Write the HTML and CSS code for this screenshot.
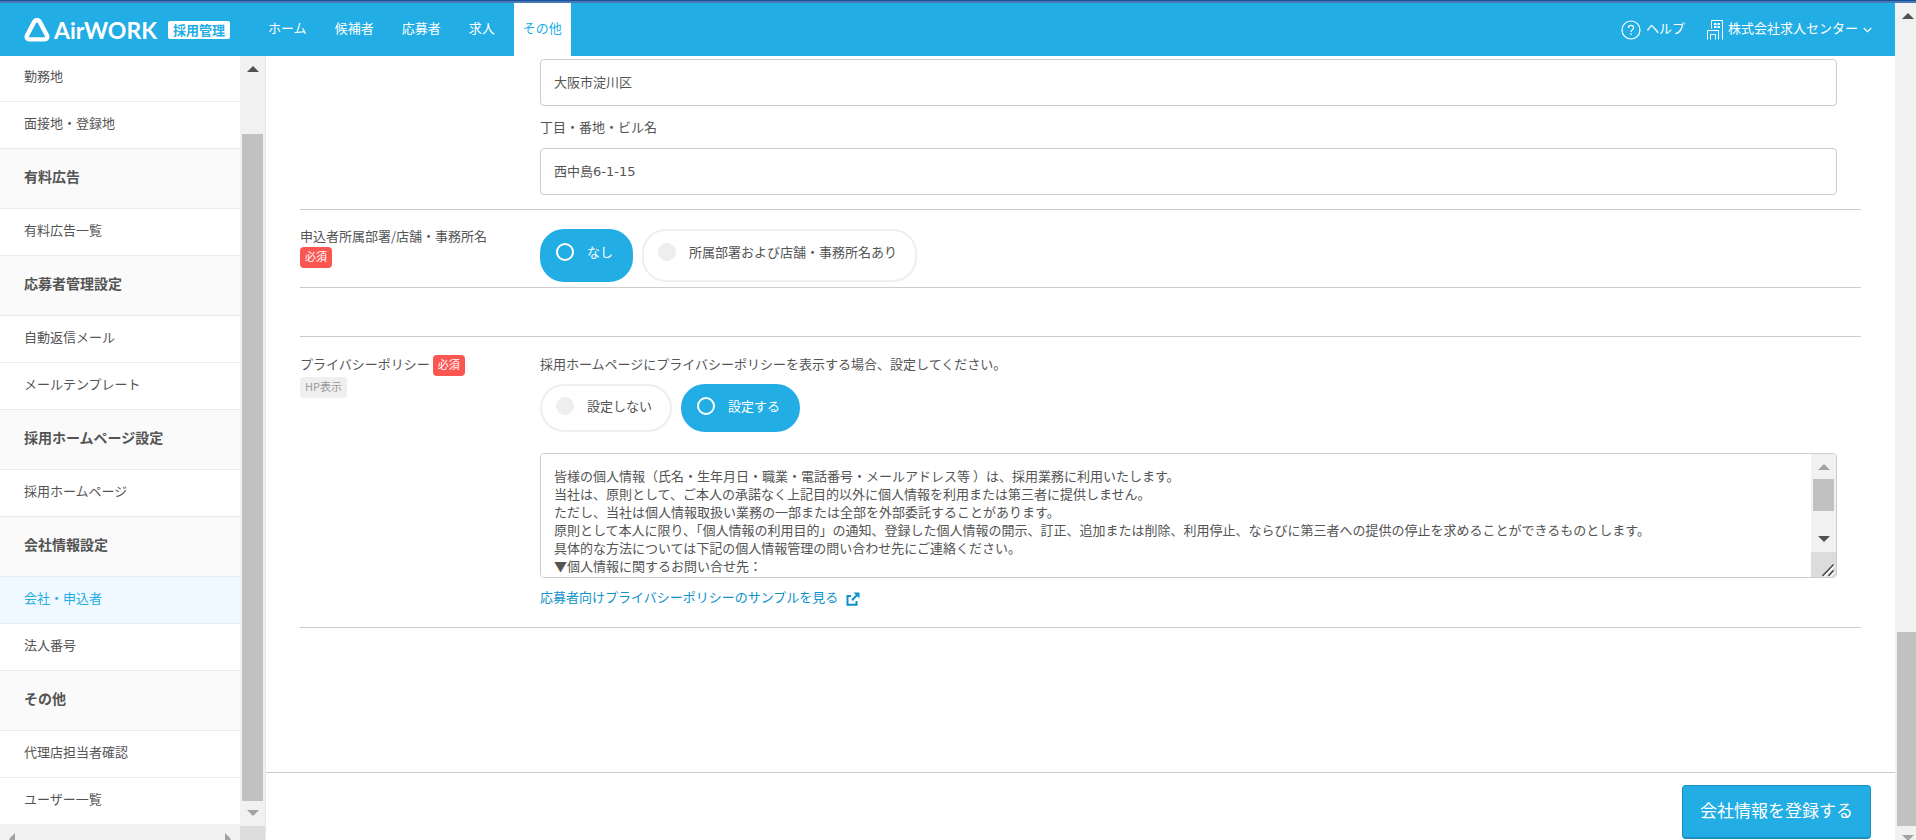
FILE: index.html
```html
<!DOCTYPE html>
<html lang="ja">
<head>
<meta charset="utf-8">
<title>AirWORK 採用管理</title>
<link rel="stylesheet" href="styles.css">
</head>
<body>
<div class="strip"></div>
<div class="window">
  <div class="page">
    <header class="header">
      <a class="logo" href="#">
        <svg class="logo-mark" viewBox="0 0 26 24" width="26" height="24" aria-hidden="true"><path d="M10.300 3.600 3.100 17.200C2 19.400 3.200 21.400 5.600 21.400H20.400C22.800 21.400 24 19.400 22.900 17.200L15.700 3.600C14.500 1.500 11.500 1.500 10.300 3.600Z" fill="none" stroke="#fff" stroke-width="4.400"/></svg>
        <span class="logo-name">AirWORK</span>
        <span class="logo-tag">採用管理</span>
      </a>
      <nav class="nav">
        <a class="nav-item" href="#">ホーム</a>
        <a class="nav-item" href="#">候補者</a>
        <a class="nav-item" href="#">応募者</a>
        <a class="nav-item" href="#">求人</a>
        <a class="nav-item nav-item-on" href="#">その他</a>
      </nav>
      <div class="account">
        <a class="help" href="#">
          <svg viewBox="0 0 20 20" width="20" height="20" fill="none" stroke="#fff" aria-hidden="true"><circle cx="10" cy="10" r="9" stroke-width="1.200"/><path d="M7.400 8C7.400 6.300 8.500 5.400 10 5.400S12.600 6.300 12.600 7.800C12.600 9.600 10 9.700 10 12" stroke-width="1.200"/><path d="M10 13.300V14.800" stroke-width="1.400"/></svg>
          <span class="account-text">ヘルプ</span>
        </a>
        <button class="company" type="button">
          <svg viewBox="0 0 16 20" width="16" height="20" fill="none" stroke="#fff" aria-hidden="true"><path d="M4.500 8.500V.500H15.500V19.500M.500 19.500V10.500H11.500V19.500M3.500 19.500V14.500H8.500V19.500"/><path d="M7 4H9.500M10.500 4H13M7 7H9.500M10.500 7H13" stroke-width="2"/></svg>
          <span class="account-text">株式会社求人センター</span>
          <svg class="chevron" viewBox="0 0 9 6" width="9" height="6" fill="none" stroke="#fff" aria-hidden="true"><path d="M.700 1 4.500 4.600 8.300 1" stroke-width="1.200"/></svg>
        </button>
      </div>
    </header>
    <div class="body">
      <aside class="side">
        <div class="side-col">
          <div class="side-list">
            <a class="side-item" href="#">勤務地</a>
            <a class="side-item" href="#">面接地・登録地</a>
            <h2 class="side-head">有料広告</h2>
            <a class="side-item" href="#">有料広告一覧</a>
            <h2 class="side-head">応募者管理設定</h2>
            <a class="side-item" href="#">自動返信メール</a>
            <a class="side-item" href="#">メールテンプレート</a>
            <h2 class="side-head">採用ホームページ設定</h2>
            <a class="side-item" href="#">採用ホームページ</a>
            <h2 class="side-head">会社情報設定</h2>
            <a class="side-item side-item-on" href="#">会社・申込者</a>
            <a class="side-item" href="#">法人番号</a>
            <h2 class="side-head">その他</h2>
            <a class="side-item" href="#">代理店担当者確認</a>
            <a class="side-item side-item-last" href="#">ユーザー一覧</a>
          </div>
          <div class="hbar"><i class="arrow arrow-left"></i><i class="arrow arrow-right"></i></div>
        </div>
        <div class="vbar vbar-side">
          <i class="arrow arrow-up"></i>
          <div class="track"><div class="thumb thumb-side"></div></div>
          <i class="arrow arrow-down arrow-off"></i>
          <div class="corner"></div>
        </div>
      </aside>
      <main class="main">
        <form class="form" id="company-form">
          <section class="row row-address">
            <div></div>
            <div class="fields">
              <input class="text" type="text" value="大阪市淀川区" aria-label="市区町村">
              <label class="field-label" for="street">丁目・番地・ビル名</label>
              <input class="text" id="street" type="text" value="西中島6-1-15">
            </div>
          </section>
          <section class="row row-office">
            <div class="label">申込者所属部署/店舗・事務所名<br><span class="badge">必須</span></div>
            <div class="pills pills-tall">
              <label class="pill pill-on"><input type="radio" name="office" checked>なし</label>
              <label class="pill"><input type="radio" name="office">所属部署および店舗・事務所名あり</label>
            </div>
          </section>
          <section class="row row-policy">
            <div class="label">プライバシーポリシー <span class="badge">必須</span><br><span class="badge badge-grey">HP表示</span></div>
            <div class="fields">
              <p class="note">採用ホームページにプライバシーポリシーを表示する場合、設定してください。</p>
              <div class="pills">
                <label class="pill"><input type="radio" name="policy">設定しない</label>
                <label class="pill pill-on"><input type="radio" name="policy" checked>設定する</label>
              </div>
              <div class="area">
                <textarea class="area-text" aria-label="プライバシーポリシー">皆様の個人情報（氏名・生年月日・職業・電話番号・メールアドレス等 ）は、採用業務に利用いたします。
当社は、原則として、ご本人の承諾なく上記目的以外に個人情報を利用または第三者に提供しません。
ただし、当社は個人情報取扱い業務の一部または全部を外部委託することがあります。
原則として本人に限り、「個人情報の利用目的」の通知、登録した個人情報の開示、訂正、追加または削除、利用停止、ならびに第三者への提供の停止を求めることができるものとします。
具体的な方法については下記の個人情報管理の問い合わせ先にご連絡ください。
▼個人情報に関するお問い合せ先：</textarea>
                <div class="vbar vbar-area">
                  <i class="arrow arrow-up arrow-off"></i>
                  <div class="track"><div class="thumb thumb-area"></div></div>
                  <i class="arrow arrow-down"></i>
                  <svg class="corner-grip" viewBox="0 0 25 25" width="25" height="25" aria-hidden="true"><path d="M12 25 23 13M18 25 23 19.500" stroke="#fff" stroke-width="3"/><path d="M11.500 24 22.500 12.500M17.500 24 22.500 18.500" stroke="#444" stroke-width="1.600"/></svg>
                </div>
              </div>
              <a class="sample" href="#">応募者向けプライバシーポリシーのサンプルを見る
                <svg class="sample-icon" viewBox="0 0 14 14" width="14" height="14" fill="none" stroke="#0d92c9" stroke-width="2" aria-hidden="true"><path d="M5 4H1.500V12.700H10.500V9M6 8.200 11 3"/><path d="M7.500.500H13.500V6.500Z" fill="#0d92c9" stroke="none"/></svg>
              </a>
            </div>
          </section>
        </form>
        <footer class="footer">
          <button class="submit" type="submit" form="company-form">会社情報を登録する</button>
        </footer>
      </main>
    </div>
  </div>
  <div class="vbar vbar-page">
    <i class="arrow arrow-up"></i>
    <div class="track"><div class="thumb thumb-page"></div></div>
    <i class="arrow arrow-down arrow-off"></i>
  </div>
</div>
</body>
</html>
```
FILE: styles.css
```css
* { box-sizing: border-box; }
body {
  margin: 0;
  height: 100vh;
  overflow: hidden;
  display: flex;
  flex-direction: column;
  font: 13px/20px "Noto Sans CJK JP", sans-serif;
  color: #545454;
  background: #fff;
}
a { color: inherit; text-decoration: none; }
button, input, textarea { font: inherit; color: inherit; }

.strip {
  flex: none;
  height: 3px;
  background: #4779b8;
  border-top: 1px solid #1a4f98;
}
.window { flex: 1; display: flex; min-height: 0; }
.page { flex: 1; min-width: 0; display: flex; flex-direction: column; }

/* Header */
.header {
  flex: none;
  height: 53px;
  display: flex;
  align-items: center;
  padding: 0 23px 0 24px;
  background: #22ade5;
  color: #fff;
}
.logo { display: flex; align-items: center; width: 235px; }
.logo-name {
  margin-left: 4px;
  font: 700 23px/24px Lato, sans-serif;
  width: 114px;
}
.logo-tag {
  padding: 0 5px;
  border-radius: 2px;
  background: #fff;
  color: #22ade5;
  font-weight: 700;
  line-height: 18px;
}
.nav { display: flex; gap: 10px; height: 100%; }
.nav-item { padding: 15px 9px 0; }
.nav-item-on { background: #fff; color: #22ade5; }
.account { margin-left: auto; display: flex; align-items: center; gap: 22px; }
.help, .company { display: flex; align-items: center; gap: 5px; }
.company {
  padding: 0;
  border: 0;
  background: none;
  color: #fff;
}
.account-text { padding-bottom: 4px; }

/* Sidebar */
.body { flex: 1; display: flex; min-height: 0; }
.side { flex: none; display: flex; width: 266px; border-right: 1px solid #e8e8e8; }
.side-col { width: 240px; display: flex; flex-direction: column; }
.side-list {
  flex: 1;
  min-height: 0;
  display: flex;
  flex-direction: column;
  justify-content: flex-end;
  overflow: hidden;
}
.side-item, .side-head {
  flex: none;
  margin: 0;
  border-bottom: 1px solid #ebebeb;
}
.side-item { padding: 11px 24px 15px; }
.side-item-on { background: #f0f9ff; color: #22ade5; }
.side-item-last { border-color: #f1f1f1; }
.side-head {
  padding: 17px 24px 22px;
  background: #fafafa;
  font-size: 14px;
  font-weight: 700;
  line-height: 20px;
}
.hbar {
  flex: none;
  height: 15px;
  display: flex;
  justify-content: space-between;
  padding: 8px 9px 0;
  background: #f1f1f1;
  overflow: hidden;
}

/* Scroll bars */
.vbar {
  flex: none;
  width: 25px;
  display: flex;
  flex-direction: column;
  align-items: center;
  background: #f1f1f1;
}
.arrow { flex: none; width: 0; height: 0; border: 6px solid transparent; }
.arrow-up { border-top: 0; border-bottom-color: #505050; }
.arrow-down { border-bottom: 0; border-top-color: #505050; }
.arrow-up.arrow-off { border-bottom-color: #a3a3a3; }
.arrow-down.arrow-off { border-top-color: #a3a3a3; }
.arrow-left { border-left: 0; border-right-color: #a3a3a3; }
.arrow-right { border-right: 0; border-left-color: #a3a3a3; }
.track { flex: 1; width: 21px; display: flex; flex-direction: column; }
.thumb { background: #c1c1c1; }
.vbar-side { padding-top: 10px; }
.vbar-side .track { padding: 9px 0; }
.thumb-side { margin-top: auto; height: 92.700%; }
.corner { width: 25px; height: 14px; margin-top: 10px; background: #dcdcdc; }
.vbar-page { width: 21px; padding-top: 10px; overflow: hidden; }
.vbar-page .track { width: 19px; align-self: flex-end; padding-bottom: 9px; }
.vbar-page .arrow { margin-left: 4px; }
.vbar-page .arrow-down { margin-bottom: -1px; }
.thumb-page { margin-top: auto; height: 24%; }

/* Form */
.main { flex: 1; min-width: 0; display: flex; flex-direction: column; }
.form { flex: 1; min-height: 0; overflow: hidden; padding: 3px 34px 0; }
.row {
  display: grid;
  grid-template-columns: 240px 1fr;
  border-bottom: 1px solid #ccc;
}
.fields { display: flex; flex-direction: column; align-items: flex-start; padding-right: 24px; }
.row-address { padding-bottom: 14px; }
.row-office { padding: 19px 0 5px; }
.row-policy { margin-top: 48px; border-top: 1px solid #ccc; padding: 17px 0 20px; }
.row-office .label { margin-top: -3px; }
.text {
  width: 100%;
  height: 47px;
  padding: 0 13px 2px;
  border: 1px solid #ccc;
  border-radius: 4px;
  background: #fff;
  font-family: "DejaVu Sans", "Noto Sans CJK JP", sans-serif;
}
.field-label { margin: 11px 0; }
.badge {
  display: inline-block;
  padding: 0 5px 2px;
  border-radius: 4px;
  background: #fa5753;
  color: #fff;
  font-size: 11px;
  line-height: 19px;
  vertical-align: middle;
}
.badge-grey { background: #efefef; color: #999; }

.pills { display: flex; gap: 9px; margin-top: 10px; }
.pill {
  display: flex;
  align-items: center;
  height: 48px;
  padding: 0 18px 4px 14px;
  border: 2px solid #eee;
  border-radius: 24px;
}
.pill input {
  appearance: none;
  width: 18px;
  height: 18px;
  margin: 0 13px 0 0;
  border-radius: 50%;
  background: #eee;
}
.pill-on { background: #22ade5; border-color: #22ade5; color: #fff; }
.pill-on input { border: 2px solid #fff; background: none; }
.pills-tall { margin-top: 0; }
.pills-tall .pill { height: 53px; padding-bottom: 7px; }

.note { margin: 0; }
.area {
  width: 100%;
  height: 125px;
  margin-top: 21px;
  display: flex;
  border: 1px solid #ccc;
  border-radius: 4px;
  overflow: hidden;
}
.area-text {
  flex: 1;
  min-width: 0;
  padding: 13px 13px 0;
  border: 0;
  outline: 0;
  resize: none;
  overflow: hidden;
  background: #fff;
  line-height: 18px;
}
.vbar-area { padding-top: 10px; }
.vbar-area .track { padding-top: 9px; }
.thumb-area { height: 32px; }
.corner-grip { flex: none; margin-top: 10px; background: #dcdcdc; }
.sample {
  display: flex;
  align-items: center;
  gap: 8px;
  margin-top: 9px;
  color: #0d92c9;
}
.sample-icon { margin-top: 4px; }

/* Footer */
.footer {
  flex: none;
  display: flex;
  justify-content: flex-end;
  padding: 12px 24px 1px;
  border-top: 1px solid #ccc;
}
.submit {
  height: 54px;
  padding: 0 17px 4px;
  border: 1px solid #1b8fc0;
  border-bottom-width: 2px;
  border-radius: 4px;
  background: #22ade5;
  color: #fff;
  font-size: 17px;
}
```
